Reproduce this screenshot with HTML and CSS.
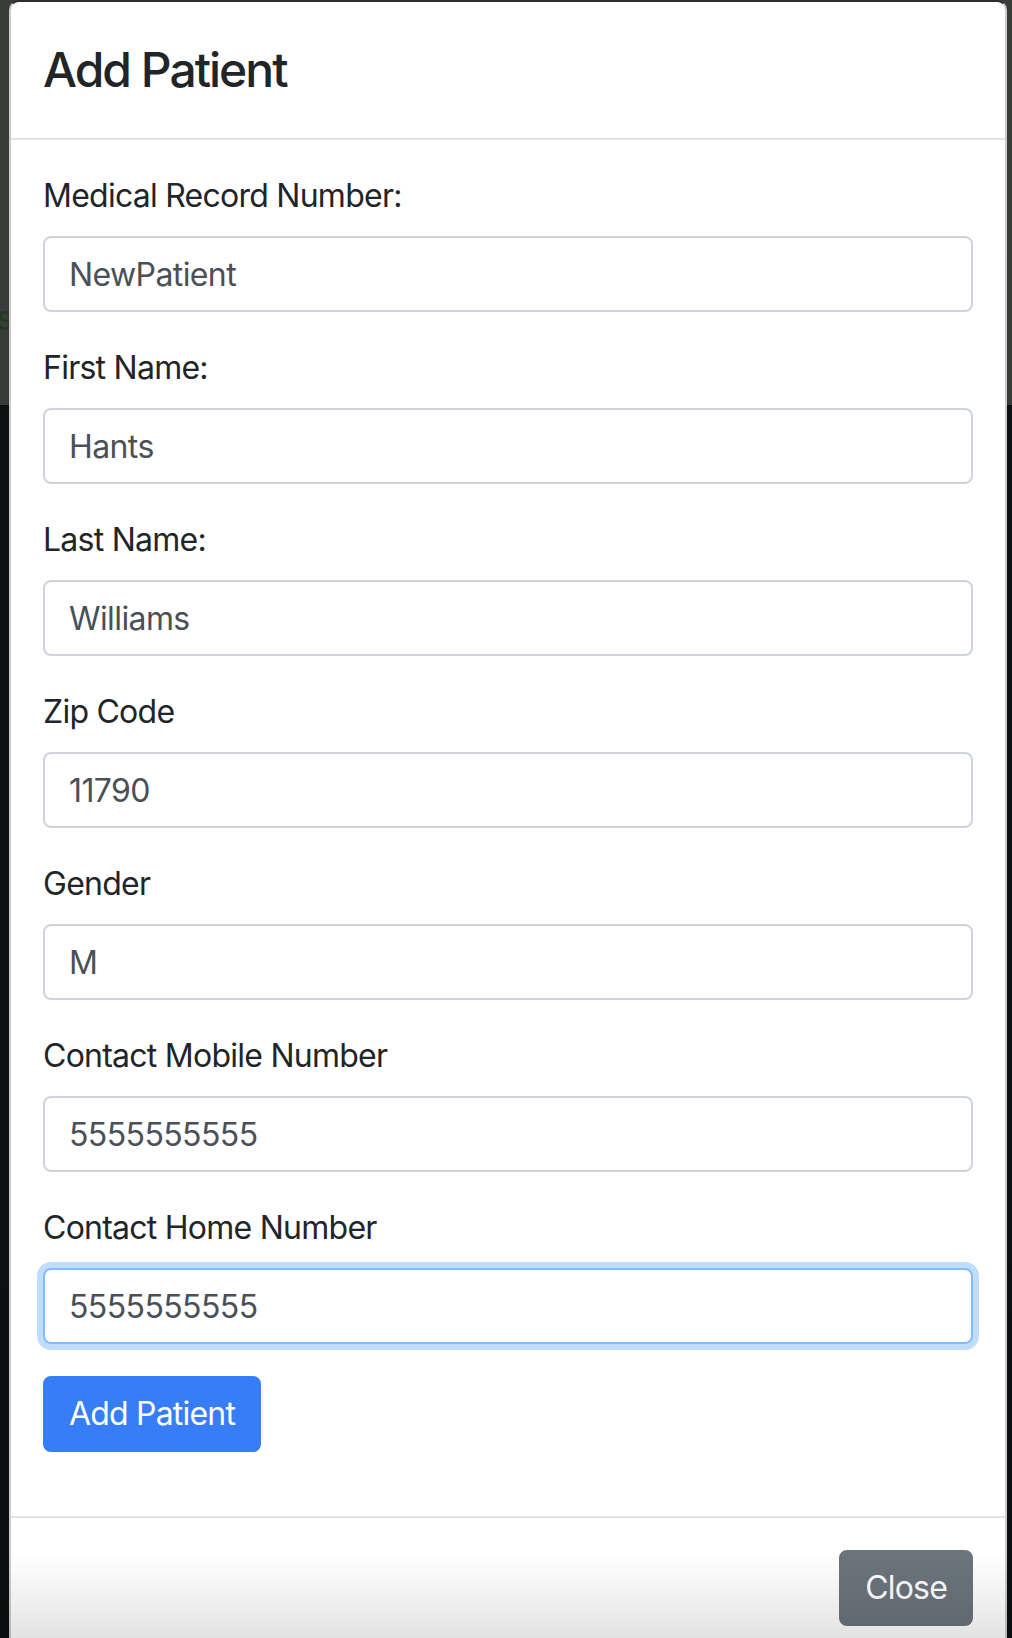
FILE: index.html
```html
<!DOCTYPE html>
<html lang="en">
<head>
<meta charset="utf-8">
<title>Add Patient</title>
<link rel="stylesheet" href="styles.css">
</head>
<body>
<div class="backdrop-text">s</div>
<div class="modal">
  <div class="modal-header">
    <h4 class="modal-title">Add Patient</h4>
  </div>
  <div class="modal-body">
    <form class="patient-form">
      <div class="form-group">
        <label class="form-label">Medical Record Number:</label>
        <input class="form-control" type="text" value="NewPatient">
      </div>
      <div class="form-group">
        <label class="form-label">First Name:</label>
        <input class="form-control" type="text" value="Hants">
      </div>
      <div class="form-group">
        <label class="form-label">Last Name:</label>
        <input class="form-control" type="text" value="Williams">
      </div>
      <div class="form-group">
        <label class="form-label">Zip Code</label>
        <input class="form-control" type="text" value="11790">
      </div>
      <div class="form-group">
        <label class="form-label">Gender</label>
        <input class="form-control" type="text" value="M">
      </div>
      <div class="form-group">
        <label class="form-label">Contact Mobile Number</label>
        <input class="form-control" type="text" value="5555555555">
      </div>
      <div class="form-group">
        <label class="form-label">Contact Home Number</label>
        <input class="form-control is-focused" type="text" value="5555555555">
      </div>
      <div class="form-group">
        <button type="button" class="btn btn-primary">Add Patient</button>
      </div>
    </form>
  </div>
  <div class="modal-footer">
    <button type="button" class="btn btn-secondary">Close</button>
  </div>
</div>
<div class="bottom-fade"></div>
</body>
</html>
```

FILE: styles.css
```css
* { box-sizing: border-box; }

html, body {
  margin: 0;
  padding: 0;
}

body {
  font-family: Inter, "Noto Sans", "Liberation Sans", sans-serif;
  background: linear-gradient(to bottom, #3a3c3a 0, #3a3c3a 405px, #0e1011 405px, #0c0e0f 100%);
  min-height: 1638px;
  color: #212529;
  position: relative;
  overflow: hidden;
}

.backdrop-text {
  position: absolute;
  left: -4px;
  top: 298px;
  font-size: 34px;
  color: #213a21;
  line-height: 40px;
}

.modal {
  position: relative;
  margin-left: 9px;
  width: 998px;
  background: #fff;
  border: 2px solid rgba(0, 0, 0, 0.2);
  border-top-color: #2e2e2e;
  border-radius: 10px 10px 0 0;
}

.modal-header {
  padding: 32px 32px;
  border-bottom: 2px solid #dee2e6;
}

.modal-title {
  margin: 0;
  font-size: 48px;
  line-height: 72px;
  font-weight: 500;
  color: #212529;
  letter-spacing: -2px;
}

.modal-body {
  padding: 32px;
}

.patient-form {
  margin: 0;
}

.form-group {
  display: flex;
  flex-direction: column;
  align-items: flex-start;
  margin-bottom: 32px;
}

.form-label {
  font-size: 32px;
  line-height: 48px;
  margin-bottom: 16px;
  color: #212529;
  letter-spacing: -0.75px;
}

.form-control {
  display: block;
  width: 100%;
  height: 76px;
  padding: 12px 24px;
  font-family: inherit;
  font-size: 32px;
  line-height: 48px;
  color: #495057;
  background: #fff;
  border: 2px solid #ced4da;
  border-radius: 8px;
  outline: none;
  letter-spacing: -0.6px;
}

.form-control.is-focused {
  border-color: #80bdff;
  box-shadow: 0 0 0 6px rgba(0, 123, 255, 0.25);
}

.btn {
  display: inline-block;
  font-family: inherit;
  font-size: 32px;
  line-height: 48px;
  font-weight: 400;
  padding: 12px 24px;
  border: 2px solid transparent;
  border-radius: 8px;
  color: #fff;
  cursor: pointer;
  letter-spacing: -0.8px;
}

.btn-primary {
  background: #377df7;
  border-color: #377df7;
}

.btn-secondary {
  background: #6c747c;
  border-color: #6c747c;
}

.modal-footer {
  display: flex;
  justify-content: flex-end;
  padding: 24px;
  border-top: 2px solid #dee2e6;
  min-height: 200px;
  align-items: flex-start;
}

.modal-footer .btn {
  margin: 8px;
}

.bottom-fade {
  position: fixed;
  left: 0;
  right: 0;
  bottom: 0;
  height: 84px;
  background: linear-gradient(to bottom, rgba(0, 0, 0, 0), rgba(0, 0, 0, 0.11));
  pointer-events: none;
}
```
